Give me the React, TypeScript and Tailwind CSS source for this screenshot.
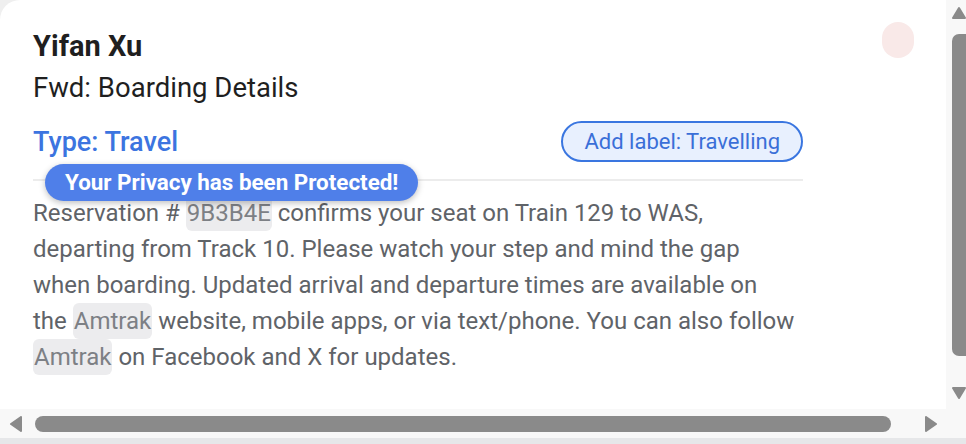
import React from 'react';

const Hl: React.FC<{ children: React.ReactNode }> = ({ children }) => (
  <span className="bg-[#ececee] text-[#7d8085] rounded-md px-[1px] py-[4px]">{children}</span>
);

const VScrollbar: React.FC = () => (
  <div className="w-[20px] h-full bg-[#f8f8f8] flex flex-col items-end pt-[6px]">
    <svg width="14" height="14" viewBox="0 0 14 14" className="shrink-0">
      <path d="M7 2 L13 12 L1 12 Z" fill="#8a8a8a" stroke="#8a8a8a" strokeWidth="2" strokeLinejoin="round" />
    </svg>
    <div className="mt-[14px] w-[14px] h-[322px] bg-[#8a8a8a] rounded-l-[7px]" />
    <div className="mt-[30px]">
      <svg width="14" height="14" viewBox="0 0 14 14">
        <path d="M1 2 L13 2 L7 12 Z" fill="#8a8a8a" stroke="#8a8a8a" strokeWidth="2" strokeLinejoin="round" />
      </svg>
    </div>
  </div>
);

const HScrollbar: React.FC = () => (
  <div className="h-[29px] bg-[#f8f8f8] flex items-center pl-[9px]">
    <svg width="14" height="16" viewBox="0 0 14 16" className="shrink-0">
      <path d="M12 1 L12 15 L2 8 Z" fill="#8a8a8a" stroke="#8a8a8a" strokeWidth="2" strokeLinejoin="round" />
    </svg>
    <div className="ml-[12px] w-[856px] h-[16px] bg-[#8a8a8a] rounded-full" />
    <svg width="14" height="16" viewBox="0 0 14 16" className="ml-[33px] shrink-0">
      <path d="M2 1 L2 15 L12 8 Z" fill="#8a8a8a" stroke="#8a8a8a" strokeWidth="2" strokeLinejoin="round" />
    </svg>
  </div>
);

export default function App() {
  return (
    <div className="w-[966px] h-[444px] bg-[#e6e7e9] flex flex-col overflow-hidden" style={{ fontFamily: 'Roboto, "Open Sans", sans-serif' }}>
      <div className="h-[438px] flex flex-col bg-[#f8f8f8]">
        <div className="flex h-[409px] bg-[#efefef]">
          <div className="relative w-[946px] h-full bg-white rounded-tl-[20px] pl-[33px] pt-[29px] flex">
            <div className="w-[770px] shrink-0">
              <h1 className="text-[29px] leading-[34px] font-bold text-[#1f1f1f]">Yifan Xu</h1>
              <h2 className="mt-[8px] text-[27.5px] leading-[34px] text-[#1f1f1f]">Fwd: Boarding Details</h2>
              <div className="mt-[16px] flex items-center justify-between">
                <span className="text-[27px] leading-[34px] font-medium text-[#3c74e0]">Type: Travel</span>
                <span className="h-[41px] px-[21px] flex items-center rounded-full border-2 border-[#3a76e0] bg-[#e8f0fe] text-[22px] text-[#3a6fd8]">
                  Add label: Travelling
                </span>
              </div>
              <div className="mt-[17px] h-[2px] bg-[#ececec]" />
              <p className="mt-[14px] text-[24px] leading-[36px] text-[#5f6368] whitespace-nowrap">
                Reservation # <Hl>9B3B4E</Hl> confirms your seat on Train 129 to WAS,
                <br />
                departing from Track 10. Please watch your step and mind the gap
                <br />
                when boarding. Updated arrival and departure times are available on
                <br />
                the <Hl>Amtrak</Hl> website, mobile apps, or via text/phone. You can also follow
                <br />
                <Hl>Amtrak</Hl> on Facebook and X for updates.
              </p>
            </div>
            <div className="ml-auto mr-[32px] mt-[-7px] w-[32px] h-[36px] rounded-full bg-[#f9e9e8]" />
            <div className="absolute left-[45px] top-[164px] h-[37px] px-[20px] flex items-center rounded-full bg-[#4f7fe9] shadow-[0_2px_6px_rgba(0,0,0,0.25)] text-white text-[22.4px] font-bold whitespace-nowrap">
              Your Privacy has been Protected!
            </div>
          </div>
          <VScrollbar />
        </div>
        <HScrollbar />
      </div>
    </div>
  );
}
